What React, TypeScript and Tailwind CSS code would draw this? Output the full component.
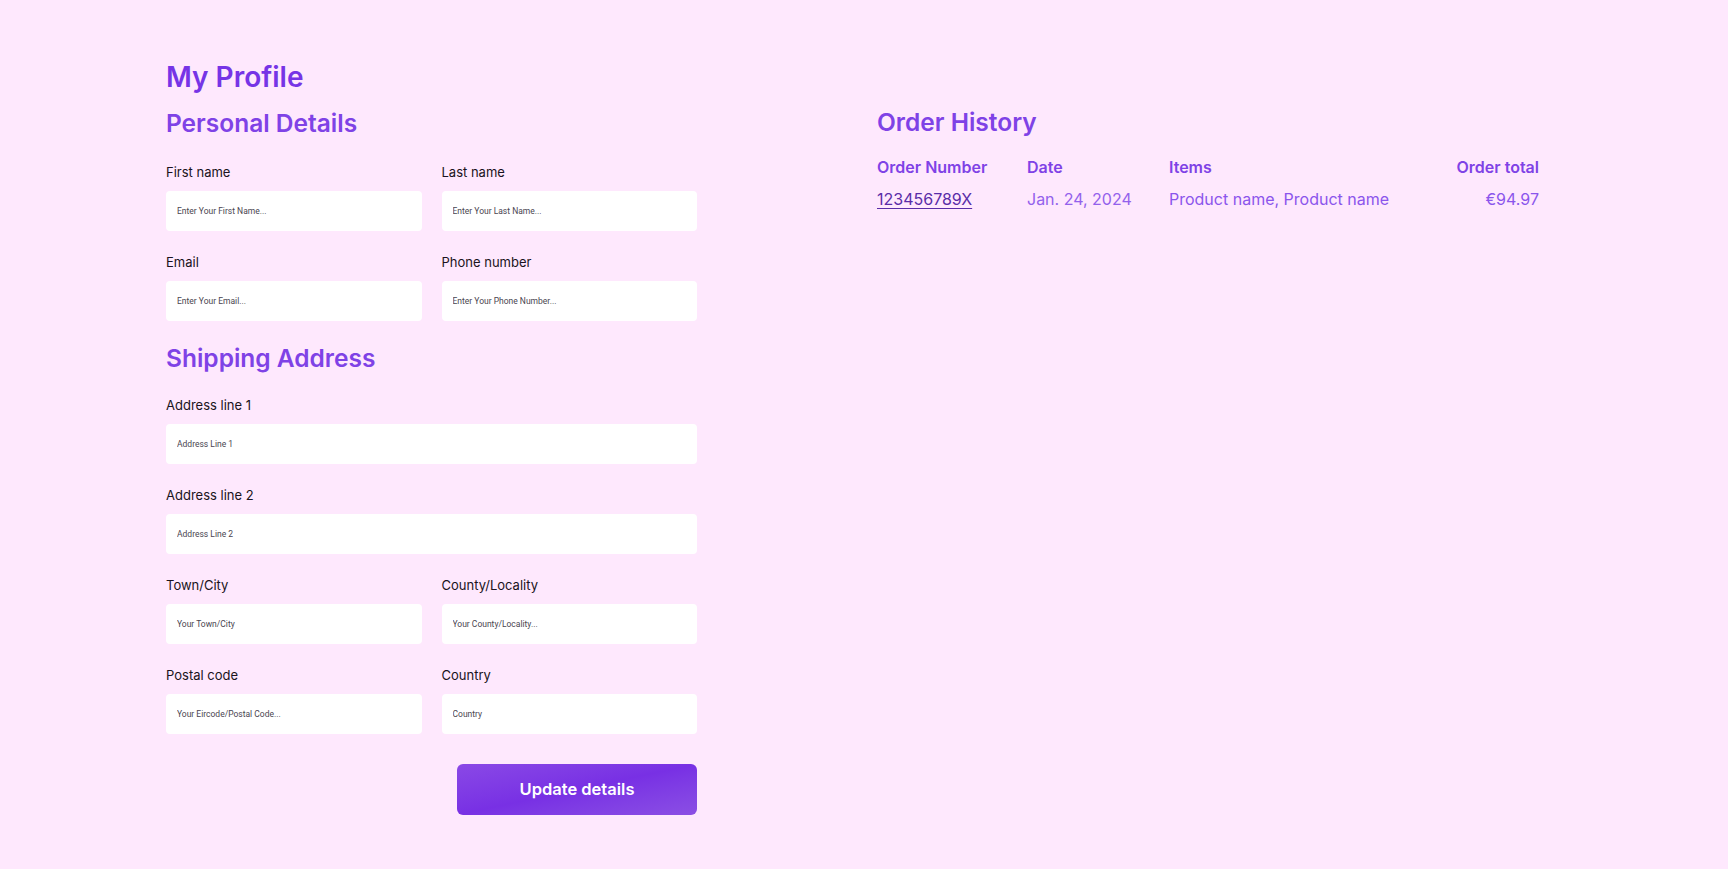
import React from "react";

type Field = { label: string; placeholder: string };

const Input = ({ label, placeholder }: Field) => (
  <div className="flex flex-col">
    <label className="text-[13px] leading-none text-[#1a1320] mb-[12px]">{label}</label>
    <input
      type="text"
      placeholder={placeholder}
      className="h-[40px] w-full rounded-[4px] bg-white px-[11px] text-[8.5px] font-['Roboto',sans-serif] outline-none placeholder:text-[#4a4550]"
    />
  </div>
);

const orders = [
  { number: "123456789X", date: "Jan. 24, 2024", items: "Product name, Product name", total: "€94.97" },
];

export default function App() {
  return (
    <div className="min-h-[869px] w-full bg-[#fee8fd] font-['Inter',sans-serif]">
      <div className="flex gap-[180px] pl-[166px] pt-[63px]">
        <section className="w-[531px]">
          <h1 className="text-[28px] leading-none font-semibold text-[#7634e6]">My Profile</h1>
          <h2 className="mt-[20px] text-[24.5px] leading-none font-semibold text-[#7f42e6]">Personal Details</h2>

          <div className="mt-[30px] grid grid-cols-2 gap-x-[20px] gap-y-[25px]">
            <Input label="First name" placeholder="Enter Your First Name..." />
            <Input label="Last name" placeholder="Enter Your Last Name..." />
            <Input label="Email" placeholder="Enter Your Email..." />
            <Input label="Phone number" placeholder="Enter Your Phone Number..." />
          </div>

          <h2 className="mt-[25px] text-[24.5px] leading-none font-semibold text-[#7f42e6]">Shipping Address</h2>

          <div className="mt-[29px] grid grid-cols-2 gap-x-[20px] gap-y-[25px]">
            <div className="col-span-2">
              <Input label="Address line 1" placeholder="Address Line 1" />
            </div>
            <div className="col-span-2">
              <Input label="Address line 2" placeholder="Address Line 2" />
            </div>
            <Input label="Town/City" placeholder="Your Town/City" />
            <Input label="County/Locality" placeholder="Your County/Locality..." />
            <Input label="Postal code" placeholder="Your Eircode/Postal Code..." />
            <Input label="Country" placeholder="Country" />
          </div>

          <div className="mt-[30px] flex justify-end">
            <button className="h-[51px] w-[240px] rounded-[6px] bg-linear-to-br from-[#8a48e6] via-[#7830e4] to-[#8b4ee4] text-[16.5px] font-semibold text-white">
              Update details
            </button>
          </div>
        </section>

        <section className="w-[662px] pt-[47px]">
          <h2 className="text-[24.5px] leading-none font-semibold text-[#7f42e6]">Order History</h2>
          <div className="mt-[24px] grid grid-cols-[150px_142px_1fr_auto] gap-y-[16px] text-[16px] leading-none">
            <div className="font-semibold text-[#7f42e6]">Order Number</div>
            <div className="font-semibold text-[#7f42e6]">Date</div>
            <div className="font-semibold text-[#7f42e6]">Items</div>
            <div className="text-right font-semibold text-[#7f42e6]">Order total</div>
            {orders.map((o) => (
              <React.Fragment key={o.number}>
                <a href="#" className="w-fit text-[#5a2ca8] underline underline-offset-[3px]">{o.number}</a>
                <div className="text-[#9361ec]">{o.date}</div>
                <div className="text-[#8b55ec]">{o.items}</div>
                <div className="text-right text-[#8b55ec]">{o.total}</div>
              </React.Fragment>
            ))}
          </div>
        </section>
      </div>
    </div>
  );
}
